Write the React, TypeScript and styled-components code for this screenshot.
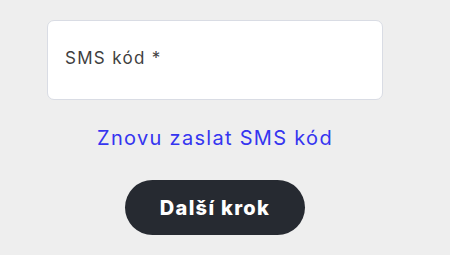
import React from "react";
import styled, { createGlobalStyle } from "styled-components";

const Global = createGlobalStyle`
  html, body { margin: 0; padding: 0; background: #eeeeee; }
  body { font-family: "Inter", "Liberation Sans", sans-serif; }
`;

const Page = styled.div`
  width: 450px;
  height: 255px;
  box-sizing: border-box;
  padding: 20px 0 0 47px;
`;

const Column = styled.div`
  width: 336px;
  display: flex;
  flex-direction: column;
  align-items: center;
`;

const Field = styled.div`
  width: 100%;
  height: 80px;
  box-sizing: border-box;
  background: #ffffff;
  border: 1px solid #d9dce4;
  border-radius: 7px;
  padding: 27px 0 0 17px;
`;

const Label = styled.span`
  font-size: 17px;
  letter-spacing: 1.3px;
  color: #3f3f3f;
  line-height: 20px;
`;

const Link = styled.a`
  margin-top: 26px;
  font-size: 20px;
  letter-spacing: 1.3px;
  line-height: 24px;
  color: #3535f0;
  text-decoration: none;
  cursor: pointer;
`;

const Button = styled.button`
  margin-top: 30px;
  width: 180px;
  height: 55px;
  border: none;
  border-radius: 28px;
  background: #262a31;
  color: #ffffff;
  font-family: "Inter", "Liberation Sans", sans-serif;
  font-size: 20px;
  letter-spacing: 1.3px;
  font-weight: 800;
  cursor: pointer;
`;

export default function App() {
  return (
    <>
      <Global />
      <Page>
        <Column>
          <Field>
            <Label>SMS kód *</Label>
          </Field>
          <Link>Znovu zaslat SMS kód</Link>
          <Button>Další krok</Button>
        </Column>
      </Page>
    </>
  );
}
